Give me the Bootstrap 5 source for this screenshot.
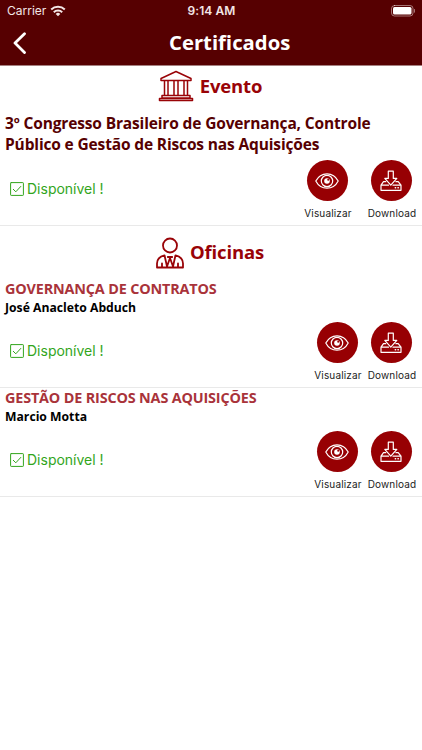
<!DOCTYPE html>
<html lang="pt-BR">
<head>
<meta charset="utf-8">
<meta name="viewport" content="width=device-width, initial-scale=1">
<title>Certificados</title>
<link href="https://cdn.jsdelivr.net/npm/bootstrap@5.3.0/dist/css/bootstrap.min.css" rel="stylesheet">
<style>
body{font-family:"Open Sans","Noto Sans",sans-serif;background:#fff;overflow:hidden}
svg{display:block;flex:none;fill:none;stroke:currentColor;stroke-linecap:round;stroke-linejoin:round}
.app-head{background:#560001;height:66px;border-bottom:1px solid #a58080}
.status{height:22px;font:400 12px/22px Inter,"Liberation Sans",sans-serif;padding:0 6px 0 7px;color:#f3e6e6}
.status>*{flex:1 1 0}
.clock{font-weight:600;letter-spacing:.1px}
.title-bar{height:42px;padding-left:12px}
.title-bar h1{font-size:20.3px;font-weight:700;line-height:40px;margin-left:141px;padding-bottom:2px}
.section-title{height:40px;gap:6px;color:#990307;font-size:18.5px;font-weight:700;letter-spacing:-.15px;padding-right:2px}
.section-title.workshops{height:53px}
.item{border-bottom:1px solid #e9e9e9}
.item-event{height:160px}
.item-first{height:162px}
.item-next{height:109px}
.event-name{color:#560001;font-size:15.5px;line-height:20.5px;font-weight:700;padding:7px 5px 0;letter-spacing:-.145px}
.course{color:#a9333a;font-size:14.4px;line-height:20px;font-weight:700;padding:0 5px;letter-spacing:-.16px}
.author{color:#000;font-size:12.2px;line-height:17px;font-weight:700;padding:0 5px}
.state{color:#32a51c;font:400 14px/20px Inter,"Liberation Sans",sans-serif;gap:3px;padding-left:10px;margin-bottom:8px}
.act{width:48px;color:#222;font:400 10px/14px Inter,"Liberation Sans",sans-serif;letter-spacing:.16px;white-space:nowrap}
.act-label{padding-left:1px}
.disc{width:41px;height:41px;background:#970003;color:#fff;margin-bottom:5px}
.acts{padding-right:7px;height:65px}
.acts-wide{gap:16px}.acts-tight{gap:6px}
.row-event{padding-top:6px}.row-course{padding-top:6px}
.act-label{margin-right:-1px}
</style>
<script src="https://cdn.jsdelivr.net/npm/bootstrap@5.3.0/dist/js/bootstrap.bundle.min.js"></script>
</head>
<body>
<svg width="0" height="0" class="position-absolute" aria-hidden="true">
  <symbol id="eye" viewBox="0 0 24 18"><path d="M.8 9C3.300 4.200 7.400 1.800 12 1.800S20.700 4.200 23.200 9C20.700 13.800 16.600 16.200 12 16.200S3.300 13.800.8 9Z"/><circle cx="12" cy="9" r="5.700"/><circle cx="12" cy="9" r="2.800" fill="currentColor" stroke="none"/><circle cx="13.200" cy="7.800" r="1" fill="#970003" stroke="none"/></symbol>
  <symbol id="save" viewBox="0 0 22 22"><path d="M8.300 1.200h5v7.200h3.500L10.800 15.200 4.800 8.400h3.500Z"/><path d="M5.700 11.700H3.500L1 15.200V20.300H21V15.200L18.200 11.700H15.900M1 15.200h7.500M13 15.200h8"/><path d="M15.300 17.800h.3M18 17.800h.3" stroke-width="1.500"/></symbol>
  <symbol id="check" viewBox="0 0 14 14"><rect x=".6" y=".6" width="12.800" height="12.800" rx=".6"/><path d="m3.300 7.300 2.500 2.500 5-5.400"/></symbol>
</svg>

<header class="app-head text-white">
  <div class="status d-flex">
    <div class="d-flex align-items-center gap-1">Carrier
      <svg width="16" height="12" viewBox="0 0 16 12" stroke-width="2"><path stroke-linecap="butt" d="M1.200 4.500a9.700 9.700 0 0 1 13.600 0M3.800 7.200a6 6 0 0 1 8.400 0"/><path d="M5.700 8.900a3.300 3.300 0 0 1 4.600 0L8 11.300Z" fill="currentColor" stroke="none"/></svg>
    </div>
    <div class="clock text-center">9:14 AM</div>
    <div class="d-flex align-items-center justify-content-end"><svg width="25" height="12" viewBox="0 0 25 12"><rect x=".5" y=".5" width="21.500" height="10.500" rx="3" stroke-opacity=".5"/><rect x="2" y="2" width="18.500" height="7.500" rx="1.500" fill="#fff" stroke="none"/><path d="M23.500 4.500v2.700" stroke-opacity=".5"/></svg></div>
  </div>
  <div class="title-bar d-flex align-items-center">
    <svg width="16" height="22" viewBox="0 0 16 22" stroke-width="2.800"><path d="M12.500 1.800 3 11.100l9.500 9.500"/></svg>
    <h1 class="mb-0">Certificados</h1>
  </div>
</header>

<main>
  <section class="item item-event">
    <h2 class="section-title d-flex align-items-center justify-content-center m-0">
      <svg width="36" height="32" viewBox="0 0 36 32" stroke-width="1.500"><path d="M3 8.500 18 1.500l15 7v2H3ZM6.500 11v14M10 11v14M16 11v14M20 11v14M26 11v14M29.500 11v14M4 25.500h28V28H4ZM1.500 28.500h33v2h-33Z"/></svg>Evento
    </h2>
    <div class="event-name">3º Congresso Brasileiro de Governança, Controle<br>Público e Gestão de Riscos nas Aquisições</div>
    <div class="row-event d-flex justify-content-between">
      <div class="state d-flex align-items-center"><svg width="14" height="14"><use href="#check"/></svg>Disponível !</div>
      <div class="acts acts-wide d-flex">
        <div class="act d-flex flex-column align-items-center"><span class="disc rounded-circle d-flex align-items-center justify-content-center"><svg width="24" height="18" stroke-width="1.200"><use href="#eye"/></svg></span><span class="act-label">Visualizar</span></div>
        <div class="act d-flex flex-column align-items-center"><span class="disc rounded-circle d-flex align-items-center justify-content-center"><svg width="22" height="22" stroke-width="1.200"><use href="#save"/></svg></span><span class="act-label">Download</span></div>
      </div>
    </div>
  </section>

  <section>
    <div class="item item-first">
      <h2 class="section-title workshops d-flex align-items-center justify-content-center m-0">
        <svg width="28" height="32" viewBox="0 0 28 32" stroke-width="1.800"><circle cx="14" cy="8.500" r="7"/><path d="M8.500 18.300C3.500 19.500 1 22 1 26.500v4h26v-4c0-4.500-2.500-7-7.500-8.200M8.500 18.300 11 29.500 14 21 17 29.500l2.500-11.200M11.800 20h4.400M6 26.500v3.500M22 26.500v3.500"/></svg>Oficinas
      </h2>
      <div class="course">GOVERNANÇA DE CONTRATOS</div>
      <div class="author">José Anacleto Abduch</div>
      <div class="row-course d-flex justify-content-between">
        <div class="state d-flex align-items-center"><svg width="14" height="14"><use href="#check"/></svg>Disponível !</div>
        <div class="acts acts-tight d-flex">
          <div class="act d-flex flex-column align-items-center"><span class="disc rounded-circle d-flex align-items-center justify-content-center"><svg width="24" height="18" stroke-width="1.200"><use href="#eye"/></svg></span><span class="act-label">Visualizar</span></div>
          <div class="act d-flex flex-column align-items-center"><span class="disc rounded-circle d-flex align-items-center justify-content-center"><svg width="22" height="22" stroke-width="1.200"><use href="#save"/></svg></span><span class="act-label">Download</span></div>
        </div>
      </div>
    </div>
    <div class="item item-next">
      <div class="course">GESTÃO DE RISCOS NAS AQUISIÇÕES</div>
      <div class="author">Marcio Motta</div>
      <div class="row-course d-flex justify-content-between">
        <div class="state d-flex align-items-center"><svg width="14" height="14"><use href="#check"/></svg>Disponível !</div>
        <div class="acts acts-tight d-flex">
          <div class="act d-flex flex-column align-items-center"><span class="disc rounded-circle d-flex align-items-center justify-content-center"><svg width="24" height="18" stroke-width="1.200"><use href="#eye"/></svg></span><span class="act-label">Visualizar</span></div>
          <div class="act d-flex flex-column align-items-center"><span class="disc rounded-circle d-flex align-items-center justify-content-center"><svg width="22" height="22" stroke-width="1.200"><use href="#save"/></svg></span><span class="act-label">Download</span></div>
        </div>
      </div>
    </div>
  </section>
</main>
</body>
</html>
